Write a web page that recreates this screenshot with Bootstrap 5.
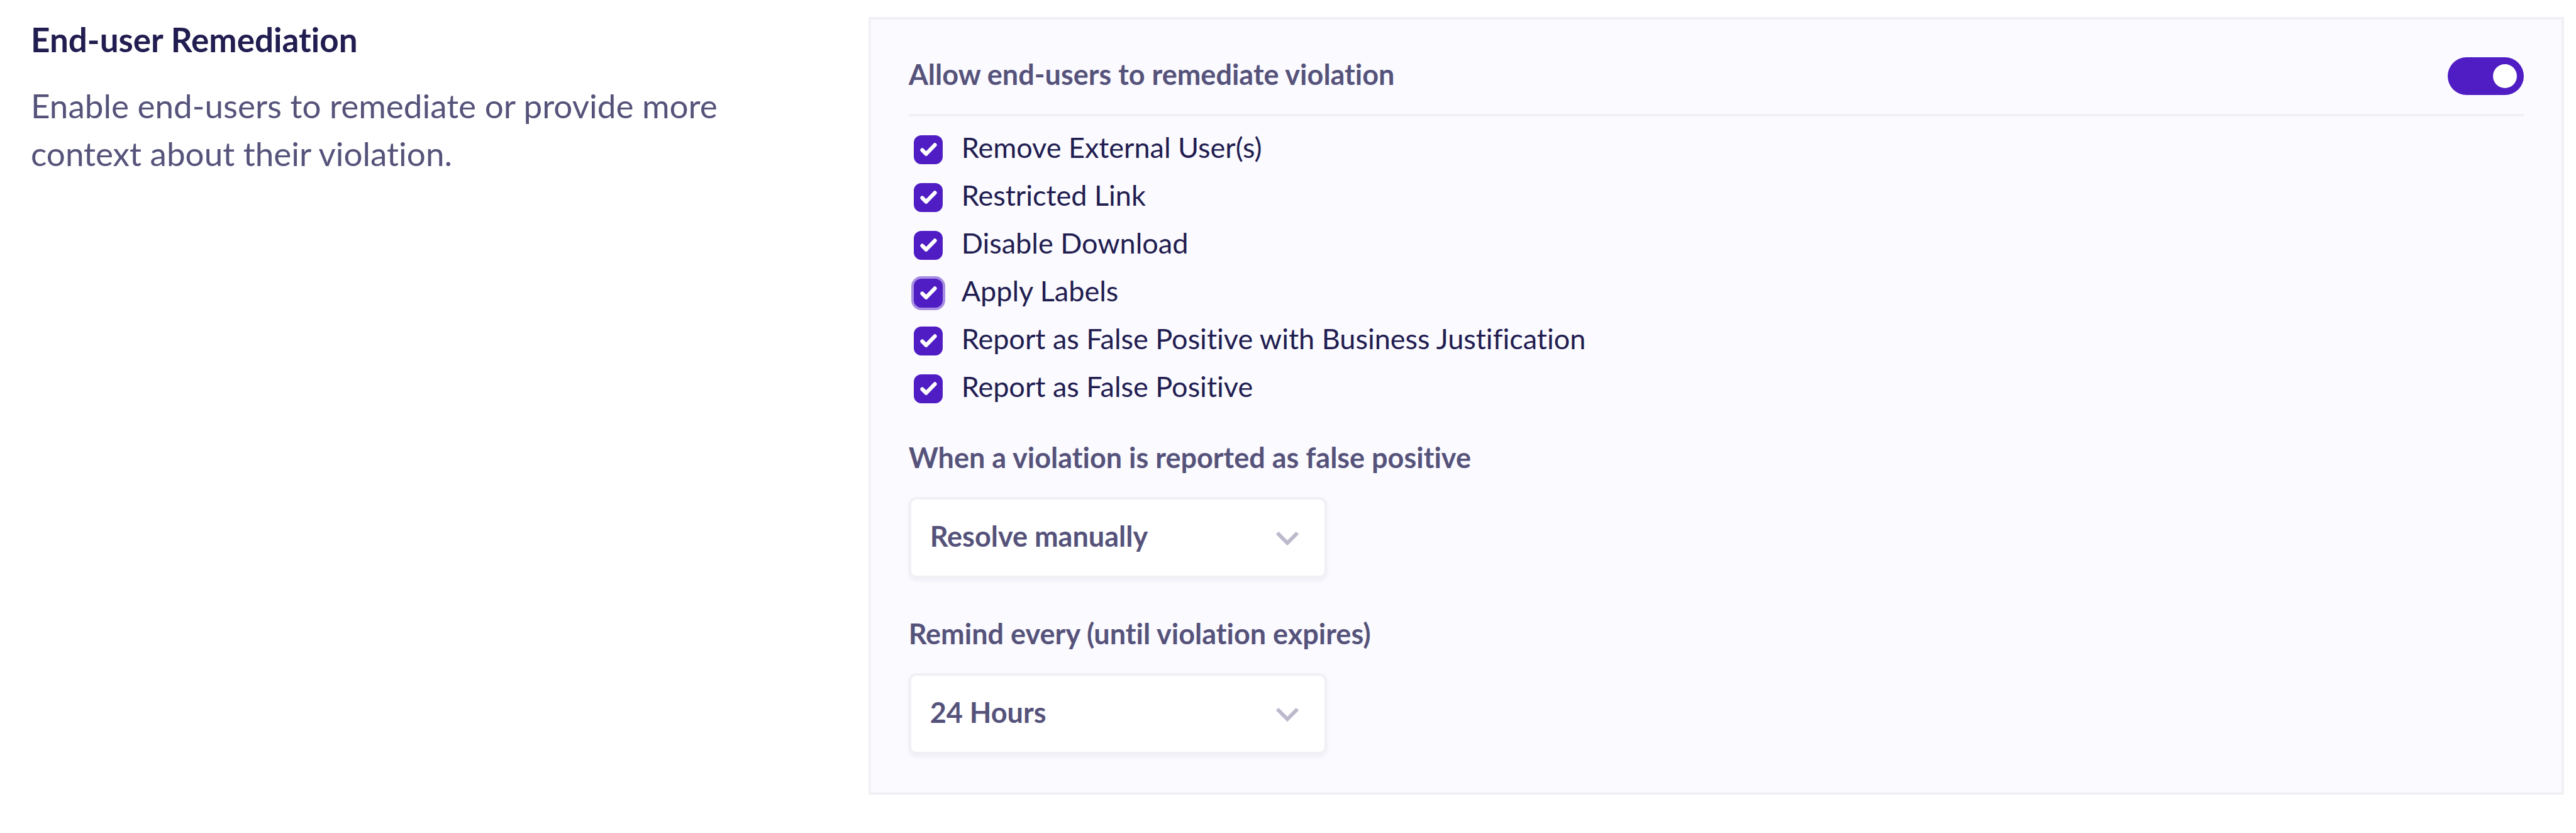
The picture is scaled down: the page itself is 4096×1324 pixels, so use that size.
<!DOCTYPE html>
<html lang="en">
<head>
<meta charset="utf-8">
<meta name="viewport" content="width=device-width, initial-scale=1">
<title>End-user Remediation</title>
<link href="https://cdn.jsdelivr.net/npm/bootstrap@5.3.0/dist/css/bootstrap.min.css" rel="stylesheet">
<style>
  :root {
    --ink: #211d50;
    --ink-soft: #56537b;
    --accent: #4f1dc3;
    --line: #f0f0f5;
    --panel: #fbfaff;
  }
  body {
    font-family: Lato, "Open Sans", sans-serif;
    font-variant-ligatures: no-common-ligatures;
    color: var(--ink);
    background: #fff;
  }
  .settings { padding: 25px 19px 0 49px; }
  .settings-intro { flex: 0 0 33.06%; padding-right: 120px; }
  .settings-title { font-size: 53px; line-height: 76px; font-weight: 700; margin-bottom: 29px; color: var(--ink); }
  .settings-text { font-size: 53px; line-height: 76px; color: var(--ink-soft); }
  .settings-panel { margin-top: 2px; padding: 60px; border: 4px solid var(--line); background: var(--panel); min-width: 0; }

  .panel-head { padding-bottom: 30px; border-bottom: 4px solid var(--line); margin-bottom: 11px; }
  .panel-label { font-size: 45px; font-weight: 700; color: var(--ink-soft); line-height: 60px; }
  .panel-head .panel-label { line-height: 55px; }

  .form-switch .form-check-input.toggle {
    width: 121px; height: 60px; margin: 0; float: none; border: 0; border-radius: 30px;
    background-color: var(--accent);
    background-image: url("data:image/svg+xml,%3csvg xmlns='http://www.w3.org/2000/svg' viewBox='0 0 60 60'%3e%3ccircle cx='30' cy='30' r='19' fill='%23fff'/%3e%3c/svg%3e");
    background-size: 60px 60px;
  }

  .option { padding-left: 8px; gap: 30px; min-height: 0; }
  .option .form-check-input {
    flex: none; float: none; width: 46px; height: 46px; margin: 19px 0 0; border: 0; border-radius: 12px;
    background-color: #fff;
  }
  .option .form-check-input:checked {
    background-color: var(--accent);
    background-image: url("data:image/svg+xml,%3csvg xmlns='http://www.w3.org/2000/svg' viewBox='0 0 48 48'%3e%3cpath d='M14 24.5l6.5 6.5L35 16' fill='none' stroke='%23fff' stroke-width='6.4' stroke-linecap='round' stroke-linejoin='round'/%3e%3c/svg%3e");
    background-size: 100% 100%;
  }
  .option .form-check-input.is-focused { box-shadow: 0 0 0 4px #a78ee1; }
  .option .form-check-label { font-size: 45px; line-height: 76px; }

  .field-first { margin-top: 45px; }
  .field-next { margin-top: 58px; }
  .field-select.form-select {
    width: 665px; height: 129px; margin-top: 33px; padding: 0 90px 6px 30px;
    font-size: 45px; font-weight: 700; line-height: 60px; color: var(--ink-soft);
    border: 4px solid var(--line); border-radius: 12px; background-color: #fff;
    background-image: url("data:image/svg+xml,%3csvg xmlns='http://www.w3.org/2000/svg' viewBox='0 0 40 24'%3e%3cpath d='M4 4l16 16L36 4' fill='none' stroke='%23bbb9cc' stroke-width='6'/%3e%3c/svg%3e");
    background-size: 40px 24px; background-position: right 39px center;
    box-shadow: 0 4px 6px rgba(31, 26, 77, .05);
  }
</style>
</head>
<body>
<main class="settings d-flex align-items-start">
  <section class="settings-intro">
    <h1 class="settings-title">End-user Remediation</h1>
    <p class="settings-text mb-0">Enable end-users to remediate or provide more context about their violation.</p>
  </section>

  <form class="settings-panel flex-grow-1">
    <div class="panel-head form-check form-switch d-flex justify-content-between align-items-start ps-0 mt-0">
      <label class="panel-label" for="allow">Allow end-users to remediate violation</label>
      <input class="form-check-input toggle" type="checkbox" role="switch" id="allow" checked>
    </div>

    <div class="option form-check d-flex align-items-start mb-0">
      <input class="form-check-input" type="checkbox" id="opt-external" checked>
      <label class="form-check-label" for="opt-external">Remove External User(s)</label>
    </div>
    <div class="option form-check d-flex align-items-start mb-0">
      <input class="form-check-input" type="checkbox" id="opt-link" checked>
      <label class="form-check-label" for="opt-link">Restricted Link</label>
    </div>
    <div class="option form-check d-flex align-items-start mb-0">
      <input class="form-check-input" type="checkbox" id="opt-download" checked>
      <label class="form-check-label" for="opt-download">Disable Download</label>
    </div>
    <div class="option form-check d-flex align-items-start mb-0">
      <input class="form-check-input is-focused" type="checkbox" id="opt-labels" checked>
      <label class="form-check-label" for="opt-labels">Apply Labels</label>
    </div>
    <div class="option form-check d-flex align-items-start mb-0">
      <input class="form-check-input" type="checkbox" id="opt-justify" checked>
      <label class="form-check-label" for="opt-justify">Report as False Positive with Business Justification</label>
    </div>
    <div class="option form-check d-flex align-items-start mb-0">
      <input class="form-check-input" type="checkbox" id="opt-false" checked>
      <label class="form-check-label" for="opt-false">Report as False Positive</label>
    </div>

    <div class="field-first">
      <label class="panel-label d-block" for="on-report">When a violation is reported as false positive</label>
      <select class="form-select field-select" id="on-report">
        <option selected>Resolve manually</option>
      </select>
    </div>
    <div class="field-next">
      <label class="panel-label d-block" for="remind">Remind every (until violation expires)</label>
      <select class="form-select field-select" id="remind">
        <option selected>24 Hours</option>
      </select>
    </div>
  </form>
</main>
<script src="https://cdn.jsdelivr.net/npm/bootstrap@5.3.0/dist/js/bootstrap.bundle.min.js"></script>
</body>
</html>
